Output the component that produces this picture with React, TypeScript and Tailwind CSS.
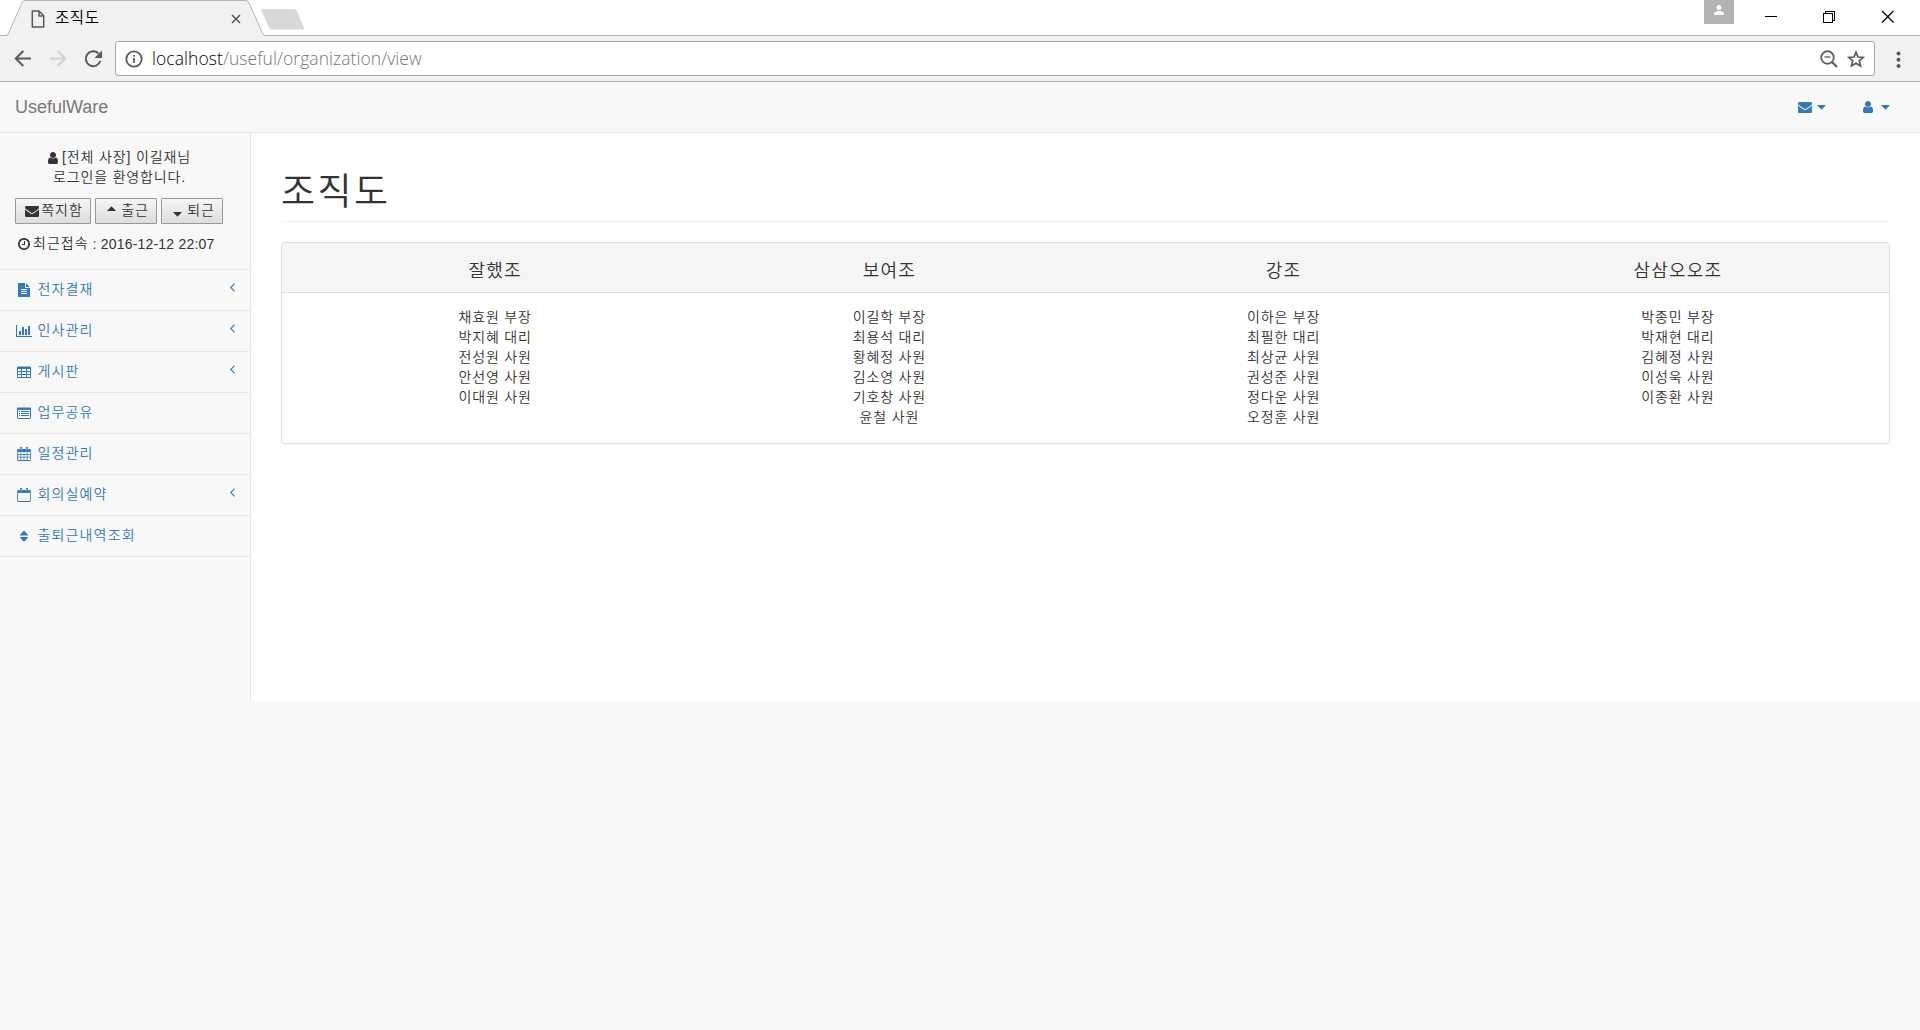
import type { ReactNode } from 'react';

const paths = {
  user: 'M1536 1399q0 109-62.5 187t-150.5 78h-854q-88 0-150.5-78t-62.5-187q0-85 8.5-160.5t31.5-152 58.5-131 94-89 134.5-34.5q131 128 313 128t313-128q76 0 134.5 34.5t94 89 58.5 131 31.5 152 8.5 160.5zm-256-887q0 159-112.5 271.5t-271.5 112.5-271.5-112.5-112.5-271.5 112.5-271.5 271.5-112.5 271.5 112.5 112.5 271.5z',
  envelope: 'M1792 710v794q0 66-47 113t-113 47h-1472q-66 0-113-47t-47-113v-794q44 49 101 87 362 246 497 345 57 42 92.5 65.5t94.5 48 110 24.5h2q51 0 110-24.5t94.5-48 92.5-65.5q170-123 498-345 57-39 100-87zm0-294q0 79-49 151t-122 123q-376 261-468 325-10 7-42.5 31t-54 38.5-52 32.5-57.5 27-50 9h-2q-23 0-50-9t-57.5-27-52-32.5-54-38.5-42.5-31q-91-64-262-182.5t-205-142.5q-62-42-117-115.5t-55-136.5q0-78 41.5-130t118.5-52h1472q65 0 112.5 47t47.5 113z',
  clock: 'M1024 544v448q0 14-9 23t-23 9h-320q-14 0-23-9t-9-23v-64q0-14 9-23t23-9h224v-352q0-14 9-23t23-9h64q14 0 23 9t9 23zm416 352q0-148-73-273t-198-198-273-73-273 73-198 198-73 273 73 273 198 198 273 73 273-73 198-198 73-273zm224 0q0 209-103 385.5t-279.5 279.5-385.5 103-385.5-103-279.5-279.5-103-385.5 103-385.5 279.5-279.5 385.5-103 385.5 103 279.5 279.5 103 385.5z',
  file: 'M1596 476q14 14 28 36h-472v-472q22 14 36 28zm-476 164h544v1056q0 40-28 68t-68 28h-1344q-40 0-68-28t-28-68v-1600q0-40 28-68t68-28h800v544q0 40 28 68t68 28zm160 736v-64q0-14-9-23t-23-9h-704q-14 0-23 9t-9 23v64q0 14 9 23t23 9h704q14 0 23-9t9-23zm0-256v-64q0-14-9-23t-23-9h-704q-14 0-23 9t-9 23v64q0 14 9 23t23 9h704q14 0 23-9t9-23zm0-256v-64q0-14-9-23t-23-9h-704q-14 0-23 9t-9 23v64q0 14 9 23t23 9h704q14 0 23-9t9-23z',
  chart: 'M640 896v512h-256v-512h256zm384-512v1024h-256v-1024h256zm1024 1152v128h-2048v-1536h128v1408h1920zm-640-896v768h-256v-768h256zm384-384v1152h-256v-1152h256z',
};

function Fa({ d, className = '' }: { d: string; className?: string }) {
  return (
    <svg viewBox="0 0 1792 1792" className={`h-3.5 w-3.5 shrink-0 overflow-visible ${className}`} fill="currentColor">
      <path d={d} />
    </svg>
  );
}

function Small({ children }: { children: ReactNode }) {
  return (
    <svg viewBox="0 0 14 14" className="h-3.5 w-3.5 shrink-0" fill="currentColor" fillRule="evenodd">
      {children}
    </svg>
  );
}

const tableIcon = (
  <Small>
    <path d="M1.200 1.500h11.600a1.200 1.200 0 0 1 1.200 1.200v9.100a1.200 1.200 0 0 1-1.200 1.200H1.200A1.200 1.200 0 0 1 0 11.800V2.700A1.200 1.200 0 0 1 1.200 1.500zM1 4v2h3V4zM5 4v2h4V4zM10 4v2h3V4zM1 7v2h3V7zM5 7v2h4V7zM10 7v2h3V7zM1 10v2h3V10zM5 10v2h4V10zM10 10v2h3V10z" />
  </Small>
);
const listIcon = (
  <Small>
    <path d="M1.200 1.500h11.600a1.200 1.200 0 0 1 1.200 1.200v9.100a1.200 1.200 0 0 1-1.200 1.200H1.200A1.200 1.200 0 0 1 0 11.800V2.700A1.200 1.200 0 0 1 1.200 1.500zM1 4v8h12V4zM2 5h1v1H2zM4 5h8v1H4zM2 7h1v1H2zM4 7h8v1H4zM2 9h1v1H2zM4 9h8v1H4z" />
  </Small>
);
const calendarIcon = (
  <Small>
    <path d="M1.200 2H3V.8a.8.8 0 0 1 .8-.8h.6a.8.8 0 0 1 .8.8V2h3.600V.8a.8.8 0 0 1 .8-.8h.6a.8.8 0 0 1 .8.8V2h1.800a1 1 0 0 1 1 1v10a1 1 0 0 1-1 1H1.200a1 1 0 0 1-1-1V3a1 1 0 0 1 1-1zM3.800 1v2.200h.6V1zM9.600 1v2.200h.6V1zM1.100 5v2H3.500V5zM4.200 5v2H6.700V5zM7.300 5v2H9.800V5zM10.500 5v2H13V5zM1.100 7.700v2H3.500v-2zM4.200 7.700v2H6.700v-2zM7.300 7.700v2H9.800v-2zM10.500 7.700v2H13v-2zM1.100 10.500V13H3.500v-2.500zM4.200 10.500V13H6.700v-2.500zM7.300 10.500V13H9.800v-2.500zM10.500 10.500V13H13v-2.500z" />
  </Small>
);
const calendarOutline = (
  <Small>
    <path d="M1.200 2H3V.8a.8.8 0 0 1 .8-.8h.6a.8.8 0 0 1 .8.8V2h3.600V.8a.8.8 0 0 1 .8-.8h.6a.8.8 0 0 1 .8.8V2h1.800a1 1 0 0 1 1 1v10a1 1 0 0 1-1 1H1.200a1 1 0 0 1-1-1V3a1 1 0 0 1 1-1zM3.800 1v2.200h.6V1zM9.600 1v2.200h.6V1zM1.100 5v8H13V5z" />
  </Small>
);
const sortIcon = (
  <Small>
    <path d="M3.100 5.700 7 1.400l3.900 4.300q.4.800-.2.800H3.300q-.6 0-.2-.8zM3.100 8.800 7 13.100l3.900-4.300q.4-.8-.2-.8H3.300q-.6 0-.2.8z" />
  </Small>
);
const chartIcon = (
  <svg viewBox="0 0 2048 1792" className="h-3.5 w-4 shrink-0" fill="currentColor">
    <path d={paths.chart} />
  </svg>
);

const menu: { label: string; icon: ReactNode; sub?: boolean }[] = [
  { label: '전자결재', icon: <Fa d={paths.file} />, sub: true },
  { label: '인사관리', icon: chartIcon, sub: true },
  { label: '게시판', icon: tableIcon, sub: true },
  { label: '업무공유', icon: listIcon },
  { label: '일정관리', icon: calendarIcon },
  { label: '회의실예약', icon: calendarOutline, sub: true },
  { label: '출퇴근내역조회', icon: sortIcon },
];

const teams = [
  { name: '잘했조', members: ['채효원 부장', '박지혜 대리', '전성원 사원', '안선영 사원', '이대원 사원'] },
  { name: '보여조', members: ['이길학 부장', '최용석 대리', '황혜정 사원', '김소영 사원', '기호창 사원', '윤철 사원'] },
  { name: '강조', members: ['이하은 부장', '최필한 대리', '최상균 사원', '권성준 사원', '정다운 사원', '오정훈 사원'] },
  { name: '삼삼오오조', members: ['박종민 부장', '박재현 대리', '김혜정 사원', '이성욱 사원', '이종환 사원'] },
];

function Caret({ up = false, className = '' }: { up?: boolean; className?: string }) {
  return (
    <svg viewBox="0 0 9 5" className={`h-[5px] w-[9px] shrink-0 ${className}`} fill="currentColor">
      <path d={up ? 'M0 5 4.500.3 9 5z' : 'M0 0h9L4.500 4.700z'} />
    </svg>
  );
}

function TabStrip() {
  return (
    <div className="relative flex h-9 border-b border-[#b3b3b3] bg-white">
      <svg className="absolute left-0 top-0 h-9 w-[310px]" viewBox="0 0 310 36" fill="none">
        <path d="M0 35.500H6Q7.500 35.500 8.100 34L22 3Q23.200.5 25 .5H246Q248 .5 249 3L263 34Q263.700 35.500 265.500 35.500V36H0z" fill="#f1f1f1" />
        <path d="M0 35.500H6Q7.500 35.500 8.100 34L22 3Q23.200.5 25 .5H246Q248 .5 249 3L263 34Q263.700 35.500 265.500 35.500H310" stroke="#b3b3b3" />
        <path d="M263 9H293.500Q296 9 297 11L303.800 27.500Q304.600 29.500 302.300 29.500H272.500Q270 29.500 269 27.500L261.500 11Q260.800 9 263 9z" fill="#d8d8d8" />
      </svg>
      <div className="relative flex h-[35px] w-[265px] items-center pl-[31px]">
        <svg viewBox="0 0 14 18" className="mt-[3px] h-[18px] w-3.5" fill="none" stroke="#5a5a5a" strokeWidth="1.500">
          <path d="M1.300 1H8l4.700 4.800V17H1.300zM8 1v5h4.700" strokeLinejoin="round" />
        </svg>
        <span className="ml-2.5 pt-0.5 text-[15.500px] font-[350] tracking-[0.6px] text-black">조직도</span>
        <svg viewBox="0 0 10 10" className="ml-auto mr-6 mt-[3px] h-[10px] w-[10px]" stroke="#555" strokeWidth="1.500">
          <path d="m1 1 8 8M9 1 1 9" />
        </svg>
      </div>
      <div className="ml-auto flex">
        <div className="flex h-6 w-[30px] justify-center bg-[#b3b3b3] pt-[5px]">
          <svg viewBox="0 0 10 10" className="h-2.5 w-2.5" fill="#fff"><circle cx="5" cy="2.500" r="2.500" /><path d="M0 10V8.500C0 6.700 3.500 6 5 6s5 .7 5 2.500V10z" /></svg>
        </div>
        <svg viewBox="0 0 186 35" className="h-[35px] w-[186px]" fill="none" stroke="#000" shapeRendering="crispEdges">
          <path d="M31 16.500h12M89.500 13.500h9v9h-9zM91.500 13.500v-2h9v9h-2" />
          <path d="m148 11 11.500 11.500M159.500 11 148 22.500" shapeRendering="auto" strokeWidth="1.200" />
        </svg>
      </div>
    </div>
  );
}

function Toolbar() {
  return (
    <div className="flex h-[46px] items-center border-b border-[#b3b3b3] bg-[#f1f1f1]">
      <svg viewBox="0 0 115 45" className="h-[45px] w-[115px]" fill="none" stroke="#5a5a5a" strokeWidth="2">
        <path d="M31 22.500H16M23.300 15 15.800 22.500l7.500 7.500" />
        <path d="M50 22.500h15M57.700 15l7.500 7.500-7.500 7.500" stroke="#d0d0d0" />
        <path d="M98.500 17.500A7.400 7.400 0 1 0 100.300 25" />
        <path d="M102 14.500v7.500h-7.500z" fill="#5a5a5a" stroke="none" />
      </svg>
      <div className="flex h-[35px] flex-1 items-center rounded-[3px] border border-[#a9a9a9] bg-white">
        <svg viewBox="0 0 18 18" className="ml-[9px] mt-px h-[18px] w-[18px]" fill="none" stroke="#5a5a5a" strokeWidth="1.800">
          <circle cx="9" cy="9" r="7.700" /><path d="M9 8v5M9 5v1.800" />
        </svg>
        <span className="ml-[9px] whitespace-nowrap font-['Open_Sans'] text-[17.500px] font-[340] tracking-[0.060px] text-[#757575]"><span className="text-black">localhost</span>/useful/organization/view</span>
        <svg viewBox="0 0 18 18" className="ml-auto h-[18px] w-[18px]" fill="none" stroke="#5a5a5a" strokeWidth="1.800">
          <circle cx="7.500" cy="7.500" r="6.300" /><path d="m12 12 5 5" strokeWidth="2.200" /><path d="M4.500 7h6" strokeWidth="1.300" />
        </svg>
        <svg viewBox="0 0 18 18" className="ml-[9px] mr-[9px] h-[18px] w-[18px]" fill="none" stroke="#5a5a5a" strokeWidth="1.700">
          <path d="m9 2.200 2 4.800 5.200.4-4 3.400 1.300 5.100L9 13.200l-4.500 2.700 1.300-5.100-4-3.400L7 7z" />
        </svg>
      </div>
      <svg viewBox="0 0 45 45" className="h-[45px] w-[45px]" fill="#5a5a5a">
        <circle cx="23.500" cy="17.500" r="2" /><circle cx="23.500" cy="23.800" r="2" /><circle cx="23.500" cy="30" r="2" />
      </svg>
    </div>
  );
}

function StatusButton({ className, children }: { className: string; children: ReactNode }) {
  return (
    <button className={`flex h-[26px] items-center justify-center rounded-[1px] border border-[#999] bg-linear-to-b from-[#f6f6f6] to-[#dddddd] pb-0.5 tracking-[0.9px] ${className}`}>
      {children}
    </button>
  );
}

function Sidebar() {
  return (
    <aside className="w-[251px] shrink-0 border-r border-[#e7e7e7] bg-[#f8f8f8]">
      <div className="flex h-[137px] flex-col border-b border-[#e7e7e7] pt-3.5">
        <div className="w-[237px] text-center leading-5 tracking-[0.850px]">
          <div className="flex items-center justify-center"><Fa d={paths.user} className="mr-0.5 mt-px" />[전체 사장] 이길재님</div>
          <div className="pl-0.5">로그인을 환영합니다.</div>
        </div>
        <div className="ml-[15px] mt-[11px] flex gap-1">
          <StatusButton className="w-[76px] pl-0.5"><Fa d={paths.envelope} className="mr-0.5 mt-0.5" />쪽지함</StatusButton>
          <StatusButton className="w-[62px] pl-1"><Caret up className="mb-1 mr-[5px]" />출근</StatusButton>
          <StatusButton className="w-[62px] pl-1"><Caret className="mr-[5px] mt-2" />퇴근</StatusButton>
        </div>
        <div className="ml-[17px] mt-[9px] flex items-center leading-5"><Fa d={paths.clock} className="mr-0.5" /><span className="pb-px tracking-[1px]">최근접속</span><span className="ml-1 whitespace-pre tracking-[0.200px]">: 2016-12-12 22:07</span></div>
      </div>
      <nav>
        {menu.map((m) => (
          <a key={m.label} className="flex h-[41px] items-center border-b border-[#e7e7e7] pr-[15px] text-[#337ab7]">
            <span className="ml-4 flex w-4 justify-center">{m.icon}</span>
            <span className="ml-[5.500px] pb-0.5 tracking-[1.150px]">{m.label}</span>
            {m.sub && (
              <svg viewBox="0 0 5 9" className="mb-[5px] ml-auto h-[9px] w-[5px]" fill="none" stroke="currentColor" strokeWidth="1.100"><path d="M4.500.7.800 4.500l3.700 3.800" /></svg>
            )}
          </a>
        ))}
      </nav>
    </aside>
  );
}

export default function App() {
  return (
    <div className="h-[1030px] w-[1920px] overflow-hidden bg-[#f8f8f8] font-['Liberation_Sans','Noto_Sans_CJK_KR',sans-serif] text-sm font-[350] text-[#333]">
      <TabStrip />
      <Toolbar />
      <header className="flex h-[51px] items-center justify-between border-b border-[#e7e7e7] bg-[#f8f8f8] pl-[15px] pr-[30px]">
        <span className="text-lg text-[#777]">UsefulWare</span>
        <div className="flex items-center text-[#337ab7]">
          <Fa d={paths.envelope} /><Caret className="ml-[5px]" />
          <Fa d={paths.user} className="ml-[35px]" /><Caret className="ml-1.5" />
        </div>
      </header>
      <div className="flex h-[568px]">
        <Sidebar />
        <main className="flex-1 bg-white px-[30px]">
          <h1 className="h-[89px] border-b border-[#eee] pt-10 text-[37px] font-[350] leading-10 tracking-[2.500px] text-[#333]">조직도</h1>
          <section className="mt-5 rounded border border-[#ddd] shadow-[0_1px_1px_rgba(0,0,0,0.05)]">
            <div className="grid h-[50px] grid-cols-4 rounded-t-[3px] border-b border-[#ddd] bg-[#f5f5f5] pl-4 pr-3.5 pt-[18px] text-center text-lg leading-5 tracking-[1.200px]">
              {teams.map((t) => <h3 key={t.name}>{t.name}</h3>)}
            </div>
            <div className="grid grid-cols-4 pb-4 pl-4 pr-3.5 pt-3.5 text-center leading-5 tracking-[0.850px]">
              {teams.map((t) => (
                <ul key={t.name}>{t.members.map((n) => <li key={n}>{n}</li>)}</ul>
              ))}
            </div>
          </section>
        </main>
      </div>
    </div>
  );
}
